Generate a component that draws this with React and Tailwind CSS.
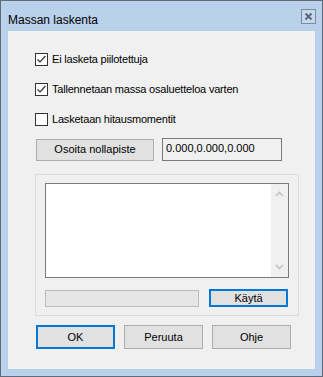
import React from "react";

const font = { fontFamily: '"Liberation Sans", Arial, sans-serif' };

const Check = ({ checked, label }) => (
  <label className="flex items-center h-[13px] gap-[4px] text-[11px] tracking-[-0.2px] text-black leading-none">
    <span className="w-[13px] h-[13px] border border-[#333333] bg-white flex items-center justify-center shrink-0">
      {checked && (
        <svg width="11" height="11" viewBox="0 0 11 11">
          <path d="M1.5 5.5 L4 8 L9.5 2" fill="none" stroke="#333333" strokeWidth="1.2" />
        </svg>
      )}
    </span>
    <span>{label}</span>
  </label>
);

const Btn = ({ children, className, focused }) => (
  <button
    className={
      "flex items-center justify-center bg-[#e1e1e1] text-[11px] text-black leading-none " +
      (focused ? "border-2 border-[#0078d7] " : "border border-[#adadad] ") +
      className
    }
  >
    {children}
  </button>
);

export default function App() {
  return (
    <div style={font} className="w-[323px] h-[377px] border border-[#5f6b78] bg-[#b9d1ea] flex flex-col">
      {/* title bar */}
      <div className="h-[30px] flex items-start justify-between pl-[7px] pr-[6px]">
        <span className="text-[12px] text-black mt-[13px] leading-none">Massan laskenta</span>
        <span className="mt-[8px] w-[15px] h-[15px] border border-[#7f8b99] bg-[#c4d8ee] flex items-center justify-center">
          <svg width="9" height="9" viewBox="0 0 9 9">
            <path d="M1.5 1.5 L7.5 7.5 M7.5 1.5 L1.5 7.5" stroke="#5b6878" strokeWidth="2" />
          </svg>
        </span>
      </div>
      {/* client area */}
      <div className="mx-[7px] mb-[7px] flex-1 bg-[#f0f0f0] pl-[27px] pt-[22px] flex flex-col">
        <div className="flex flex-col gap-[17px]">
          <Check checked label="Ei lasketa piilotettuja" />
          <Check checked label="Tallennetaan massa osaluetteloa varten" />
          <Check label="Lasketaan hitausmomentit" />
        </div>
        <div className="flex items-center gap-[8px] mt-[12px] ml-[1px]">
          <Btn className="w-[118px] h-[22px]">Osoita nollapiste</Btn>
          <div className="w-[120px] h-[23px] border border-[#7a7a7a] bg-[#f0f0f0] text-[11px] text-black leading-none pl-[3px] pt-[4px]">
            0.000,0.000,0.000
          </div>
        </div>
        {/* group box */}
        <div className="mt-[13px] w-[264px] h-[142px] border border-[#dcdcdc] pt-[8px] pl-[9px] flex flex-col">
          <div className="w-[244px] h-[95px] border border-[#7a7a7a] bg-white flex justify-end">
            <div className="w-[17px] h-full bg-[#f0f0f0] flex flex-col items-center justify-between py-[7px]">
              <svg width="9" height="6" viewBox="0 0 9 6">
                <path d="M1 5 L4.5 1.5 L8 5" fill="none" stroke="#c2c2c2" strokeWidth="1.6" />
              </svg>
              <svg width="9" height="6" viewBox="0 0 9 6">
                <path d="M1 1 L4.5 4.5 L8 1" fill="none" stroke="#c2c2c2" strokeWidth="1.6" />
              </svg>
            </div>
          </div>
          <div className="flex items-center gap-[10px] mt-[11px]">
            <div className="w-[154px] h-[17px] border border-[#bcbcbc] bg-[#e6e6e6]" />
            <Btn focused className="w-[79px] h-[18px]">Käytä</Btn>
          </div>
        </div>
        <div className="flex gap-[9px] mt-[9px] ml-[1px]">
          <Btn focused className="w-[79px] h-[24px]">OK</Btn>
          <Btn className="w-[79px] h-[24px]">Peruuta</Btn>
          <Btn className="w-[79px] h-[24px]">Ohje</Btn>
        </div>
      </div>
    </div>
  );
}
